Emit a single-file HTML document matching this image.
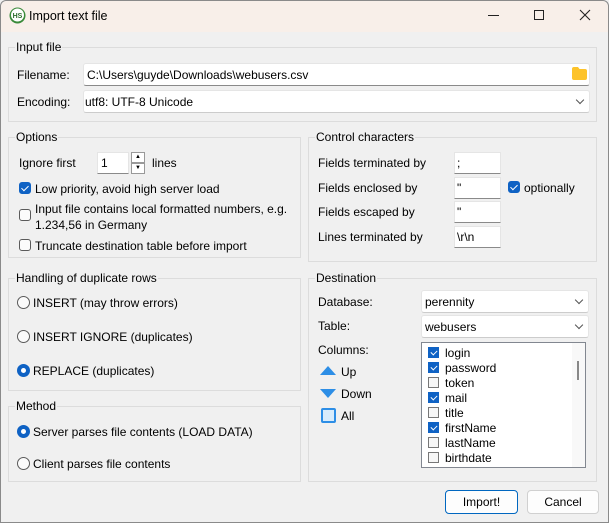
<!DOCTYPE html>
<html><head><meta charset="utf-8"><style>
*{box-sizing:border-box;margin:0;padding:0}
body{width:609px;height:523px;overflow:hidden;background:#f0f0f0;font-family:"Liberation Sans",sans-serif;font-size:12px;color:#000;position:relative}
.a{position:absolute;white-space:nowrap;line-height:16px}
.win{position:absolute;left:0;top:0;width:609px;height:523px;border:1px solid #8a8a8a;border-radius:6px 6px 0 0}
.title{position:absolute;left:1px;top:1px;width:607px;height:31px;background:#f8efe9;border-radius:6px 6px 0 0}
.g{position:absolute;border:1px solid #dcdcdc}
.lg{position:absolute;background:#f0f0f0;padding:0 1px;line-height:14px;top:-8px;left:6px;font-size:12px}
.in{position:absolute;background:#fff;border:1px solid #e5e5e5;border-bottom:1px solid #8a8a8a;line-height:22px;padding-left:5px;border-radius:3px}
.cb{position:absolute;width:12px;height:12px;border:1px solid #5a5a5a;border-radius:3px;background:#fbfbfb}
.cb.on{background:#0f62c4;border-color:#0f62c4}
.cb.on:after{content:"";position:absolute;left:3px;top:1px;width:3px;height:6px;border:solid #fff;border-width:0 1.3px 1.3px 0;transform:rotate(45deg)}
.rb{position:absolute;width:13px;height:13px;border:1px solid #5a5a5a;border-radius:50%;background:#fbfbfb}
.rb.on{background:#0f62c4;border-color:#0f62c4}
.rb.on:after{content:"";position:absolute;left:3px;top:3px;width:5px;height:5px;border-radius:50%;background:#fff}
.chev{position:absolute;right:6px;top:6px;width:6px;height:6px;border:solid #555;border-width:0 1px 1px 0;transform:rotate(45deg)}
.lc{position:absolute;width:11px;height:11px;border:1px solid #777;background:#f6f6f6}
.lc.on{background:#0f62c4;border-color:#0f62c4}
.lc.on:after{content:"";position:absolute;left:3px;top:1px;width:3px;height:5px;border:solid #fff;border-width:0 1px 1px 0;transform:rotate(45deg)}
.btn{position:absolute;height:24px;border:1px solid #d0d0d0;border-radius:4px;background:#fdfdfd;text-align:center;line-height:22px;font-size:12px}
</style></head><body>
<div class="win"></div>
<div class="title"></div>
<svg class="a" style="left:9px;top:7px" width="17" height="17" viewBox="0 0 17 17"><circle cx="8.5" cy="8.5" r="8" fill="#3a8a3a"/><circle cx="8.5" cy="8" r="6.5" fill="#fff"/><text x="8.5" y="11" font-size="7" font-weight="bold" text-anchor="middle" fill="#2a6a2a" font-family="Liberation Sans">HS</text></svg>
<div class="a" style="left:29px;top:8px;font-size:12.5px">Import text file</div>
<div class="a" style="left:488px;top:15px;width:11px;height:1px;background:#222"></div>
<div class="a" style="left:534px;top:10px;width:10px;height:10px;border:1px solid #222"></div>
<svg class="a" style="left:579px;top:9px" width="12" height="12"><path d="M1 1L11 11M11 1L1 11" stroke="#222" stroke-width="1.1"/></svg>

<div class="g" style="left:8px;top:47px;width:589px;height:75px"><div class="lg">Input file</div></div>
<div class="a" style="left:17px;top:67px">Filename:</div>
<div class="in" style="left:83px;top:63px;width:507px;height:23px;padding-left:3px">C:\Users\guyde\Downloads\webusers.csv</div>
<svg class="a" style="left:572px;top:67px" width="15" height="13"><path d="M0 2Q0 0 2 0H6L7.5 2H13Q15 2 15 4V11Q15 13 13 13H2Q0 13 0 11Z" fill="#fdc32a"/></svg>
<div class="a" style="left:17px;top:94px">Encoding:</div>
<div class="in" style="left:83px;top:90px;width:507px;height:23px;padding-left:1px;border-bottom-color:#ccc">utf8: UTF-8 Unicode<div class="chev"></div></div>

<div class="g" style="left:8px;top:137px;width:293px;height:121px"><div class="lg">Options</div></div>
<div class="a" style="left:19px;top:155px">Ignore first</div>
<div class="in" style="left:97px;top:152px;width:32px;height:22px;border-radius:0;padding-left:3px;line-height:21px">1</div>
<div class="a" style="left:131px;top:152px;width:14px;height:11px;border:1px solid #999;background:#fff;font-size:6px;text-align:center;line-height:9px">▲</div>
<div class="a" style="left:131px;top:163px;width:14px;height:11px;border:1px solid #999;background:#fff;font-size:6px;text-align:center;line-height:9px">▼</div>
<div class="a" style="left:152px;top:155px">lines</div>
<div class="cb on" style="left:19px;top:182px"></div>
<div class="a" style="left:35px;top:181px">Low priority, avoid high server load</div>
<div class="cb" style="left:19px;top:209px"></div>
<div class="a" style="left:35px;top:201px">Input file contains local formatted numbers, e.g.<br>1.234,56 in Germany</div>
<div class="cb" style="left:19px;top:239px"></div>
<div class="a" style="left:35px;top:238px">Truncate destination table before import</div>

<div class="g" style="left:308px;top:137px;width:289px;height:125px"><div class="lg">Control characters</div></div>
<div class="a" style="left:318px;top:155px">Fields terminated by</div>
<div class="a" style="left:318px;top:180px">Fields enclosed by</div>
<div class="a" style="left:318px;top:204px">Fields escaped by</div>
<div class="a" style="left:318px;top:229px">Lines terminated by</div>
<div class="in" style="left:454px;top:152px;width:47px;height:22px;border-radius:0;padding-left:2px;line-height:21px">;</div>
<div class="in" style="left:454px;top:177px;width:47px;height:22px;border-radius:0;padding-left:2px;line-height:21px">"</div>
<div class="in" style="left:454px;top:201px;width:47px;height:22px;border-radius:0;padding-left:2px;line-height:21px">"</div>
<div class="in" style="left:454px;top:226px;width:47px;height:22px;border-radius:0;padding-left:2px;line-height:21px">\r\n</div>
<div class="cb on" style="left:508px;top:181px"></div>
<div class="a" style="left:524px;top:180px">optionally</div>

<div class="g" style="left:8px;top:278px;width:293px;height:113px"><div class="lg">Handling of duplicate rows</div></div>
<div class="rb" style="left:17px;top:296px"></div><div class="a" style="left:33px;top:295px">INSERT (may throw errors)</div>
<div class="rb" style="left:17px;top:330px"></div><div class="a" style="left:33px;top:329px">INSERT IGNORE (duplicates)</div>
<div class="rb on" style="left:17px;top:364px"></div><div class="a" style="left:33px;top:363px">REPLACE (duplicates)</div>

<div class="g" style="left:8px;top:406px;width:293px;height:76px"><div class="lg">Method</div></div>
<div class="rb on" style="left:17px;top:425px"></div><div class="a" style="left:33px;top:424px">Server parses file contents (LOAD DATA)</div>
<div class="rb" style="left:17px;top:457px"></div><div class="a" style="left:33px;top:456px">Client parses file contents</div>

<div class="g" style="left:308px;top:278px;width:289px;height:204px"><div class="lg">Destination</div></div>
<div class="a" style="left:318px;top:294px">Database:</div>
<div class="in" style="left:421px;top:290px;width:168px;height:23px;border-bottom-color:#ccc;padding-left:3px">perennity<div class="chev"></div></div>
<div class="a" style="left:318px;top:318px">Table:</div>
<div class="in" style="left:421px;top:315px;width:168px;height:23px;border-bottom-color:#ccc;padding-left:3px">webusers<div class="chev"></div></div>
<div class="a" style="left:318px;top:342px">Columns:</div>
<svg class="a" style="left:320px;top:366px" width="16" height="10"><path d="M8 0L16 9H0Z" fill="#2d8ee6"/></svg>
<div class="a" style="left:341px;top:364px">Up</div>
<svg class="a" style="left:320px;top:389px" width="16" height="10"><path d="M0 0H16L8 9Z" fill="#2d8ee6"/></svg>
<div class="a" style="left:341px;top:386px">Down</div>
<div class="a" style="left:321px;top:408px;width:15px;height:15px;border:2px solid #2d8ee6;border-radius:2px;background:#d8ecfc"></div>
<div class="a" style="left:341px;top:408px">All</div>
<div class="a" style="left:421px;top:342px;width:165px;height:126px;border:1px solid #828790;background:#fff;overflow:hidden">
<div class="a" style="left:150px;top:0;width:13px;height:124px;background:#f8f8f8"></div>
<div class="a" style="left:155px;top:18px;width:2px;height:19px;background:#888"></div>
<div class="lc on" style="left:6px;top:4px"></div><div class="a" style="left:23px;top:2px">login</div>
<div class="lc on" style="left:6px;top:19px"></div><div class="a" style="left:23px;top:17px">password</div>
<div class="lc" style="left:6px;top:34px"></div><div class="a" style="left:23px;top:32px">token</div>
<div class="lc on" style="left:6px;top:49px"></div><div class="a" style="left:23px;top:47px">mail</div>
<div class="lc" style="left:6px;top:64px"></div><div class="a" style="left:23px;top:62px">title</div>
<div class="lc on" style="left:6px;top:79px"></div><div class="a" style="left:23px;top:77px">firstName</div>
<div class="lc" style="left:6px;top:94px"></div><div class="a" style="left:23px;top:92px">lastName</div>
<div class="lc" style="left:6px;top:109px"></div><div class="a" style="left:23px;top:107px">birthdate</div>
</div>
<div class="btn" style="left:445px;top:490px;width:73px;border:1px solid #0067c0">Import!</div>
<div class="btn" style="left:527px;top:490px;width:72px">Cancel</div>
</body></html>
